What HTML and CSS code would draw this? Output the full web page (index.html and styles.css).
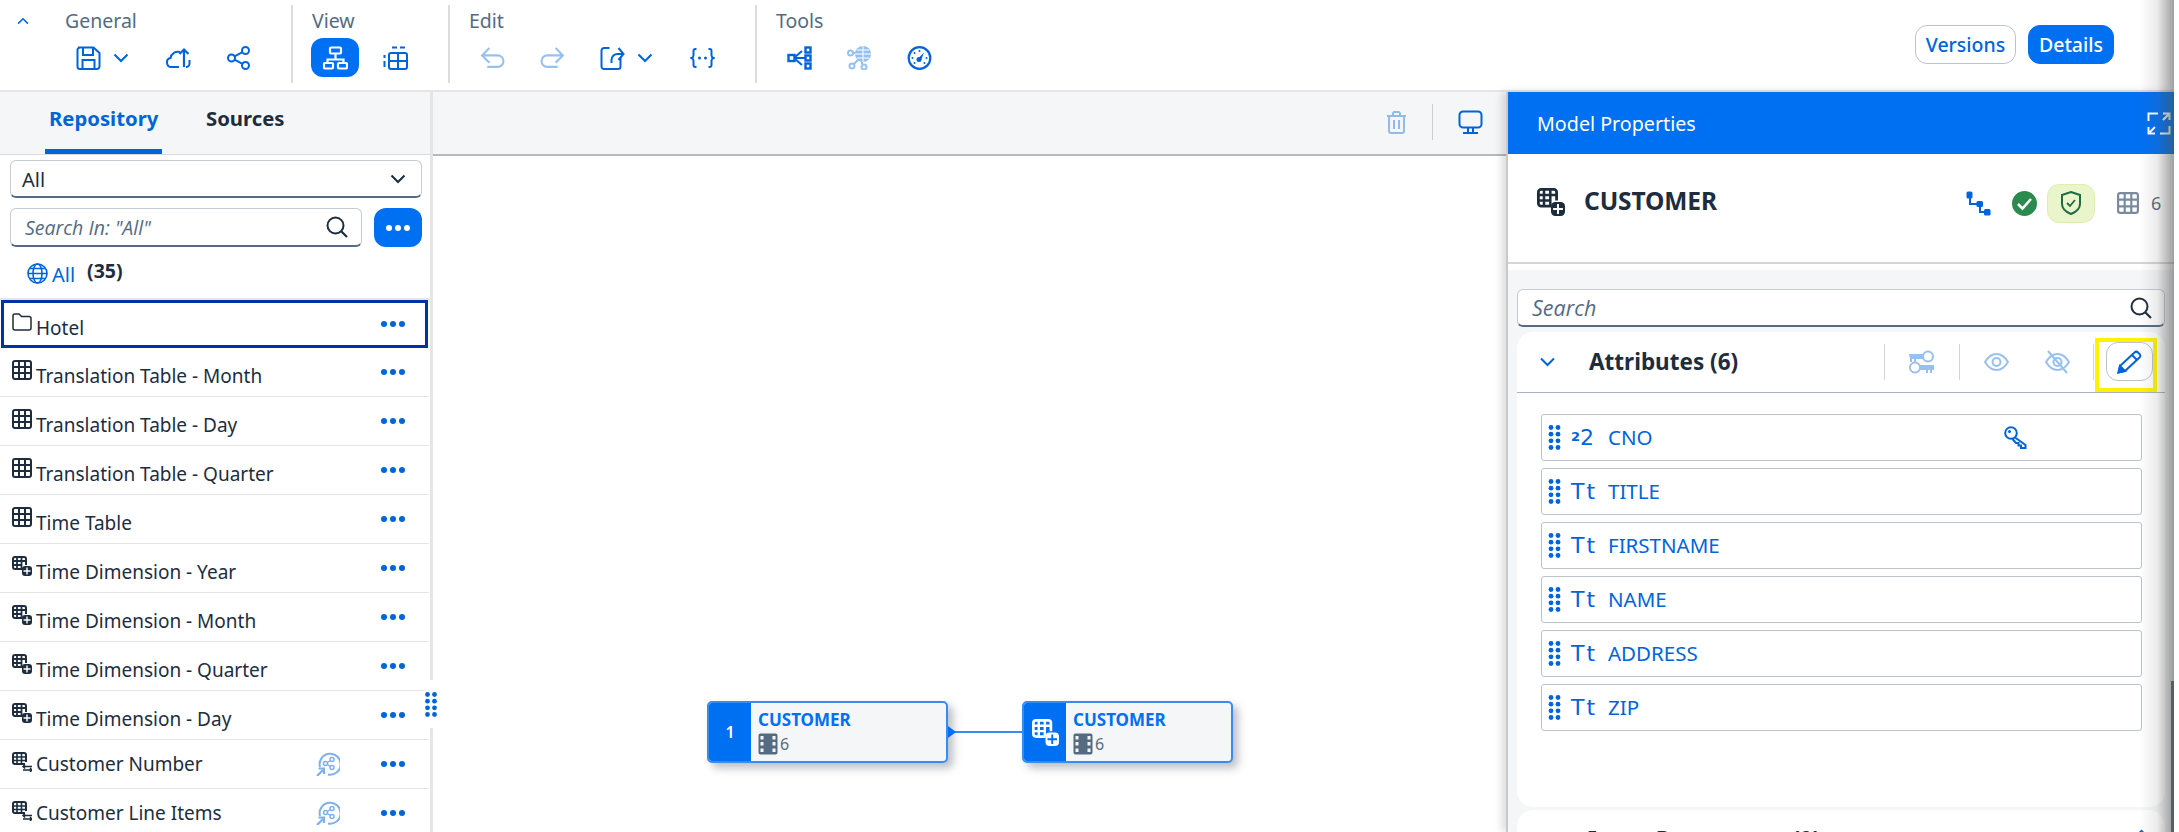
FILE: index.html
```html
<!DOCTYPE html>
<html lang="en">
<head>
<meta charset="utf-8">
<title>Model Properties</title>
<link rel="stylesheet" href="styles.css">
</head>
<body>
<svg class="defs" aria-hidden="true">
  <symbol id="i-chev" viewBox="0 0 16 10"><path d="M1.5 1.5 8 8l6.500-6.500" fill="none" stroke="currentColor" stroke-width="2"/></symbol>
  <symbol id="i-save" viewBox="0 0 25 24"><path d="M2 1.500h15.500L23.500 7v13.500a2.500 2.500 0 0 1-2.500 2.500H4a2.500 2.500 0 0 1-2.500-2.500V4A2.500 2.500 0 0 1 4 1.500zM7 2v7h10V2M6.500 23v-9h12v9" fill="none" stroke="currentColor" stroke-width="2"/></symbol>
  <symbol id="i-cloud" viewBox="0 0 25 24"><path d="M13 21H5.500a4.500 4.500 0 0 1-1-8.900A7.500 7.500 0 0 1 14 6M23.500 14v3.500a3.500 3.500 0 0 1-3.500 3.500" fill="none" stroke="currentColor" stroke-width="2"/><path d="M18 21V3.500M13.500 8 18 3.500 22.500 8" fill="none" stroke="currentColor" stroke-width="2.200"/></symbol>
  <symbol id="i-share" viewBox="0 0 24 24"><g fill="none" stroke="currentColor" stroke-width="2"><circle cx="5" cy="12" r="3.500"/><circle cx="19" cy="4.500" r="3.500"/><circle cx="19" cy="19.500" r="3.500"/><path d="m8 10.300 8-4.200M8 13.700l8 4.200"/></g></symbol>
  <symbol id="i-model" viewBox="0 0 25 24"><g fill="none" stroke="currentColor" stroke-width="2.200"><rect x="7" y="1.500" width="11" height="6" rx="1"/><path d="M12.500 7.500V13M4.500 17v-3.500h16V17"/><rect x="1" y="17" width="9" height="5.500" rx="1"/><rect x="15" y="17" width="9" height="5.500" rx="1"/></g></symbol>
  <symbol id="i-tbl-dash" viewBox="0 0 25 24"><g fill="none" stroke="currentColor" stroke-width="2"><path d="M9 1.500h5M17 1.500h5M1.500 9v3M1.500 15v6"/><rect x="6" y="7" width="18" height="16" rx="2"/><path d="M6 15h18M15 7v16"/></g></symbol>
  <symbol id="i-undo" viewBox="0 0 24 22"><path d="M9 1.500 2 8.500l7 7M2 8.500h15a5.500 5.500 0 0 1 0 11H7" fill="none" stroke="currentColor" stroke-width="2"/></symbol>
  <symbol id="i-redo" viewBox="0 0 24 22"><path d="M15 1.500l7 7-7 7M22 8.500H7a5.500 5.500 0 0 0 0 11h10" fill="none" stroke="currentColor" stroke-width="2"/></symbol>
  <symbol id="i-export" viewBox="0 0 24 24"><path d="M9 2H3.500A2.500 2.500 0 0 0 1 4.500V20.500A2.500 2.500 0 0 0 3.500 23h14a2.500 2.500 0 0 0 2.500-2.500V12" fill="none" stroke="currentColor" stroke-width="2"/><path d="M11 17v-3a6 6 0 0 1 6-6h5M18 2l5 6-5 6" fill="none" stroke="currentColor" stroke-width="2"/></symbol>
  <symbol id="i-code" viewBox="0 0 24 24"><path d="M6 3H5a2 2 0 0 0-2 2v4a3 3 0 0 1-2 3 3 3 0 0 1 2 3v4a2 2 0 0 0 2 2h1M18 3h1a2 2 0 0 1 2 2v4a3 3 0 0 0 2 3 3 3 0 0 0-2 3v4a2 2 0 0 1-2 2h-1" fill="none" stroke="currentColor" stroke-width="2"/><circle cx="9" cy="12" r="1.500" fill="currentColor"/><circle cx="15" cy="12" r="1.500" fill="currentColor"/></symbol>
  <symbol id="i-lineage" viewBox="0 0 25 24"><g fill="none" stroke="currentColor" stroke-width="2.400"><rect x="1.500" y="9" width="6" height="6"/><rect x="18.500" y="1.500" width="5" height="5"/><rect x="18.500" y="9.500" width="5" height="5"/><rect x="18.500" y="17.500" width="5" height="5"/></g><path d="M8 11 15 5M8 13l7 6M8 12h10" fill="none" stroke="currentColor" stroke-width="2"/></symbol>
  <symbol id="i-net" viewBox="0 0 25 24"><g fill="none" stroke="currentColor" stroke-width="2"><circle cx="3.500" cy="7" r="2.500"/><circle cx="5" cy="20" r="2.500"/><circle cx="17" cy="21" r="2.500"/><path d="M6 7h5M7 18l5-5M15 18v-4"/></g><circle cx="16" cy="8" r="8" fill="currentColor"/><path d="M8 8h16M16 0v16M10 4h12M10 12h12" stroke="#fff" stroke-width="1"/></symbol>
  <symbol id="i-gauge" viewBox="0 0 24 24"><circle cx="12" cy="12" r="10.800" fill="none" stroke="currentColor" stroke-width="2.200"/><path d="m10 13 6.500-6.500-3 8z" fill="currentColor"/><circle cx="11.500" cy="13.500" r="2.500" fill="currentColor"/><g fill="currentColor"><circle cx="5" cy="12" r="1"/><circle cx="7" cy="7" r="1"/><circle cx="12" cy="5" r="1"/><circle cx="19" cy="12" r="1"/><circle cx="7" cy="17" r="1"/><circle cx="17" cy="17" r="1"/></g></symbol>
  <symbol id="i-search" viewBox="0 0 22 22"><circle cx="9.500" cy="9.500" r="8" fill="none" stroke="currentColor" stroke-width="2"/><path d="m15 15 6 6" stroke="currentColor" stroke-width="2.200"/></symbol>
  <symbol id="i-dots" viewBox="0 0 24 6"><circle cx="3" cy="3" r="3" fill="currentColor"/><circle cx="12" cy="3" r="3" fill="currentColor"/><circle cx="21" cy="3" r="3" fill="currentColor"/></symbol>
  <symbol id="i-globe" viewBox="0 0 21 21"><g fill="none" stroke="currentColor" stroke-width="1.600"><circle cx="10.500" cy="10.500" r="9.500"/><ellipse cx="10.500" cy="10.500" rx="4.500" ry="9.500"/><path d="M1 10.500h19M2.500 5.500h16M2.500 15.500h16"/></g></symbol>
  <symbol id="i-folder" viewBox="0 0 20 18"><path d="M1 3a2 2 0 0 1 2-2h4l2.500 2.500H17a2 2 0 0 1 2 2V15a2 2 0 0 1-2 2H3a2 2 0 0 1-2-2z" fill="none" stroke="currentColor" stroke-width="1.500"/></symbol>
  <symbol id="i-table" viewBox="0 0 20 20"><rect x="1" y="1" width="18" height="18" rx="2" fill="none" stroke="currentColor" stroke-width="2"/><path d="M7 1v18M13 1v18M1 7h18M1 13h18" stroke="currentColor" stroke-width="2"/></symbol>
  <symbol id="i-dim" viewBox="0 0 20 20"><path d="M10 13H3a2 2 0 0 1-2-2V3a2 2 0 0 1 2-2h9a2 2 0 0 1 2 2v6" fill="none" stroke="currentColor" stroke-width="2"/><path d="M5 1v12M9.500 1v12M1 5h13M1 9h9" stroke="currentColor" stroke-width="1.800"/><rect x="10" y="10" width="10" height="10" rx="3" fill="currentColor"/><path d="M15 11.500v7M11.500 15h7" stroke="var(--cut,#fff)" stroke-width="1.400"/></symbol>
  <symbol id="i-repl" viewBox="0 0 20 20"><path d="M13 12H3a2 2 0 0 1-2-2V3a2 2 0 0 1 2-2h9a2 2 0 0 1 2 2v7" fill="none" stroke="currentColor" stroke-width="2"/><path d="M5 1v11M9.500 1v11M1 5h13M1 8.500h13" stroke="currentColor" stroke-width="1.600"/><path d="M20 14.500h-9M13 12.500l-2 2 2 2M11 18h9M18 16l2 2-2 2" fill="none" stroke="currentColor" stroke-width="1.500"/></symbol>
  <symbol id="i-rshare" viewBox="0 0 24 24"><path d="M4 15A10.500 10.500 0 1 1 12 22.500" fill="none" stroke="currentColor" stroke-width="2"/><g fill="none" stroke="currentColor" stroke-width="1.500"><circle cx="9.500" cy="11.500" r="2"/><circle cx="16" cy="7.500" r="2"/><circle cx="16" cy="15.500" r="2"/><path d="m11.500 10.500 3-2M11.500 12.500l3 2"/></g><path d="M1 24l6-6M2.500 16.500H8V22" fill="none" stroke="currentColor" stroke-width="2.200"/></symbol>
  <symbol id="i-film" viewBox="0 0 20 22"><rect x="0.500" y="0.500" width="19" height="21" rx="2" fill="currentColor"/><g fill="#f5f6f7"><rect x="2.500" y="3" width="3" height="3.500"/><rect x="2.500" y="9" width="3" height="3.500"/><rect x="2.500" y="15.500" width="3" height="3.500"/><rect x="14.500" y="3" width="3" height="3.500"/><rect x="14.500" y="9" width="3" height="3.500"/><rect x="14.500" y="15.500" width="3" height="3.500"/></g></symbol>
  <symbol id="i-trash" viewBox="0 0 21 23"><path d="M1 5h19M7 5V2.500A1.500 1.500 0 0 1 8.500 1h4A1.500 1.500 0 0 1 14 2.500V5M3 5v15a2 2 0 0 0 2 2h11a2 2 0 0 0 2-2V5M8 9v9M13 9v9" fill="none" stroke="currentColor" stroke-width="2"/></symbol>
  <symbol id="i-monitor" viewBox="0 0 25 24"><path d="M5 1.500h15A3.500 3.500 0 0 1 23.500 5v9a3.500 3.500 0 0 1-3.500 3.500H5A3.500 3.500 0 0 1 1.500 14V5A3.500 3.500 0 0 1 5 1.500zM10 18v5M15 18v5M5 23h15" fill="none" stroke="currentColor" stroke-width="2"/></symbol>
  <symbol id="i-expand" viewBox="0 0 24 23"><path d="M1.500 9V1.500H11M22.500 14v7.500H13" fill="none" stroke="currentColor" stroke-width="2"/><path d="M16 1.500h6.500V8M22 2l-6 6M8 21.500H1.500V15M2 21l6-6" fill="none" stroke="currentColor" stroke-width="2"/></symbol>
  <symbol id="i-tree" viewBox="0 0 25 25"><path d="M4 4v9h10v8h8" fill="none" stroke="currentColor" stroke-width="2"/><rect x="0.500" y="0.500" width="6" height="7" rx="1.500" fill="currentColor"/><rect x="10.500" y="10" width="6.500" height="6" rx="1.500" fill="currentColor"/><rect x="18" y="18" width="6.500" height="6.500" rx="1.500" fill="currentColor"/></symbol>
  <symbol id="i-ok" viewBox="0 0 25 25"><circle cx="12.500" cy="12.500" r="12.500" fill="#2b8a4d"/><path d="m6 13 4.500 4.500L19 8" fill="none" stroke="#fff" stroke-width="2.600"/></symbol>
  <symbol id="i-shield" viewBox="0 0 20 24"><path d="M10 1 19 4v9c0 5-4 8-9 10-5-2-9-5-9-10V4z" fill="none" stroke="#1e6b46" stroke-width="2"/><path d="m6 12 3 3 5-6" fill="none" stroke="#1e6b46" stroke-width="1.800"/></symbol>
  <symbol id="i-grip" viewBox="0 0 12 25"><g fill="currentColor"><circle cx="2.500" cy="2.500" r="2.400"/><circle cx="9.500" cy="2.500" r="2.400"/><circle cx="2.500" cy="9.200" r="2.400"/><circle cx="9.500" cy="9.200" r="2.400"/><circle cx="2.500" cy="15.800" r="2.400"/><circle cx="9.500" cy="15.800" r="2.400"/><circle cx="2.500" cy="22.500" r="2.400"/><circle cx="9.500" cy="22.500" r="2.400"/></g></symbol>
  <symbol id="i-keys" viewBox="0 0 25 24"><g fill="none" stroke="currentColor" stroke-width="2"><circle cx="19" cy="6.500" r="5"/><circle cx="6" cy="17.500" r="5"/></g><path d="M0 4h14v5H7v3H5V9H3v3H1V9z M11 15h14v5h-2v3h-2v-3h-2v3h-2v-3h-6z" fill="currentColor"/></symbol>
  <symbol id="i-eye" viewBox="0 0 25 18"><path d="M1 9c3-5 7-8 11.500-8S21 4 24 9c-3 5-7 8-11.500 8S4 14 1 9z" fill="none" stroke="currentColor" stroke-width="2"/><circle cx="12.500" cy="9" r="4" fill="none" stroke="currentColor" stroke-width="2"/></symbol>
  <symbol id="i-eyeoff" viewBox="0 0 25 24"><path d="M1 12c3-5 7-8 11.500-8S21 7 24 12c-3 5-7 8-11.500 8S4 17 1 12z" fill="none" stroke="currentColor" stroke-width="2"/><circle cx="12.500" cy="12" r="4" fill="none" stroke="currentColor" stroke-width="2"/><path d="M3 1l19 22" stroke="currentColor" stroke-width="2"/></symbol>
  <symbol id="i-pencil" viewBox="0 0 25 24"><path d="M1.500 22.500 3 16 17.500 2.500a2.500 2.500 0 0 1 3.500 0l1.500 1.500a2.500 2.500 0 0 1 0 3.500L8 21z" fill="none" stroke="currentColor" stroke-width="2"/><path d="M1.500 22.500 3 16l5 5zM15 5l5 5" fill="currentColor" stroke="currentColor" stroke-width="2"/></symbol>
  <symbol id="i-key" viewBox="0 0 23 23"><circle cx="7" cy="7" r="5.800" fill="none" stroke="currentColor" stroke-width="2"/><circle cx="5.500" cy="5.500" r="1.500" fill="currentColor"/><path d="M11 11.500 21.500 19v3H17v-2.500h-2.500V17H12L8.500 13" fill="none" stroke="currentColor" stroke-width="2"/></symbol>
</svg>

<div class="page">
  <header class="toolbar">
    <div class="collapse"><svg class="ic-chev-up"><use href="#i-chev"/></svg></div>
    <section class="group group-general">
      <div class="group-label">General</div>
      <div class="tools">
        <button class="tool split"><svg class="ic"><use href="#i-save"/></svg><svg class="ic-chev"><use href="#i-chev"/></svg></button>
        <button class="tool"><svg class="ic"><use href="#i-cloud"/></svg></button>
        <button class="tool"><svg class="ic"><use href="#i-share"/></svg></button>
      </div>
    </section>
    <section class="group">
      <div class="group-label">View</div>
      <div class="tools">
        <button class="tool active"><svg class="ic"><use href="#i-model"/></svg></button>
        <button class="tool"><svg class="ic"><use href="#i-tbl-dash"/></svg></button>
      </div>
    </section>
    <section class="group group-thin">
      <div class="group-label">Edit</div>
      <div class="tools">
        <button class="tool off"><svg class="ic"><use href="#i-undo"/></svg></button>
        <button class="tool off"><svg class="ic"><use href="#i-redo"/></svg></button>
        <button class="tool split"><svg class="ic"><use href="#i-export"/></svg><svg class="ic-chev"><use href="#i-chev"/></svg></button>
        <button class="tool"><svg class="ic"><use href="#i-code"/></svg></button>
      </div>
    </section>
    <section class="group group-last">
      <div class="group-label">Tools</div>
      <div class="tools">
        <button class="tool"><svg class="ic"><use href="#i-lineage"/></svg></button>
        <button class="tool off"><svg class="ic"><use href="#i-net"/></svg></button>
        <button class="tool"><svg class="ic"><use href="#i-gauge"/></svg></button>
      </div>
    </section>
    <div class="toolbar-actions">
      <button class="pill">Versions</button>
      <button class="pill pill-on">Details</button>
    </div>
  </header>

  <main class="main">
    <aside class="left">
      <nav class="tabs">
        <div class="tab tab-on">Repository</div>
        <div class="tab">Sources</div>
      </nav>
      <div class="filters">
        <div class="select"><span class="select-value">All</span><svg class="sel-chev"><use href="#i-chev"/></svg></div>
        <div class="search-row">
          <div class="search search-left"><span class="ph">Search In: "All"</span><svg class="ic-search"><use href="#i-search"/></svg></div>
          <button class="more"><svg class="ic-dots"><use href="#i-dots"/></svg></button>
        </div>
      </div>
      <div class="scope">
        <svg class="ic-globe"><use href="#i-globe"/></svg><span class="scope-name">All</span><b class="scope-count">(35)</b>
      </div>
      <ul class="list">
        <li class="row row-focus"><svg class="ic-row"><use href="#i-folder"/></svg><span class="name low">Hotel</span><svg class="row-dots"><use href="#i-dots"/></svg></li>
        <li class="row"><svg class="ic-row"><use href="#i-table"/></svg><span class="name low">Translation Table - Month</span><svg class="row-dots"><use href="#i-dots"/></svg></li>
        <li class="row"><svg class="ic-row"><use href="#i-table"/></svg><span class="name low">Translation Table - Day</span><svg class="row-dots"><use href="#i-dots"/></svg></li>
        <li class="row"><svg class="ic-row"><use href="#i-table"/></svg><span class="name low">Translation Table - Quarter</span><svg class="row-dots"><use href="#i-dots"/></svg></li>
        <li class="row"><svg class="ic-row"><use href="#i-table"/></svg><span class="name low">Time Table</span><svg class="row-dots"><use href="#i-dots"/></svg></li>
        <li class="row"><svg class="ic-row"><use href="#i-dim"/></svg><span class="name low">Time Dimension - Year</span><svg class="row-dots"><use href="#i-dots"/></svg></li>
        <li class="row"><svg class="ic-row"><use href="#i-dim"/></svg><span class="name low">Time Dimension - Month</span><svg class="row-dots"><use href="#i-dots"/></svg></li>
        <li class="row"><svg class="ic-row"><use href="#i-dim"/></svg><span class="name low">Time Dimension - Quarter</span><svg class="row-dots"><use href="#i-dots"/></svg></li>
        <li class="row"><svg class="ic-row"><use href="#i-dim"/></svg><span class="name low">Time Dimension - Day</span><svg class="row-dots"><use href="#i-dots"/></svg></li>
        <li class="row"><svg class="ic-row"><use href="#i-repl"/></svg><span class="name">Customer Number</span><svg class="row-share"><use href="#i-rshare"/></svg><svg class="row-dots"><use href="#i-dots"/></svg></li>
        <li class="row"><svg class="ic-row"><use href="#i-repl"/></svg><span class="name">Customer Line Items</span><svg class="row-share"><use href="#i-rshare"/></svg><svg class="row-dots"><use href="#i-dots"/></svg></li>
      </ul>
    </aside>

    <div class="splitter"><div class="grip"><svg class="ic-grip"><use href="#i-grip"/></svg></div></div>

    <section class="canvas">
      <div class="canvas-bar">
        <svg class="ic-trash"><use href="#i-trash"/></svg>
        <span class="canvas-sep"></span>
        <svg class="ic-monitor"><use href="#i-monitor"/></svg>
      </div>
      <div class="stage">
        <div class="node node-a">
          <div class="node-side node-num">1</div>
          <div class="node-body"><div class="node-title">CUSTOMER</div><div class="node-meta"><svg class="ic-film"><use href="#i-film"/></svg>6</div></div>
        </div>
        <div class="link"></div>
        <div class="node node-b">
          <div class="node-side"><svg class="ic-node"><use href="#i-dim"/></svg></div>
          <div class="node-body"><div class="node-title">CUSTOMER</div><div class="node-meta"><svg class="ic-film"><use href="#i-film"/></svg>6</div></div>
        </div>
      </div>
    </section>

    <aside class="panel">
      <div class="panel-head"><span>Model Properties</span><svg class="ic-expand"><use href="#i-expand"/></svg></div>
      <div class="panel-meta">
        <svg class="ic-title"><use href="#i-dim"/></svg>
        <h1 class="panel-title">CUSTOMER</h1>
        <div class="meta-right">
          <svg class="ic-25 blue"><use href="#i-tree"/></svg>
          <svg class="ic-25 m21"><use href="#i-ok"/></svg>
          <span class="shield"><svg class="ic-shield"><use href="#i-shield"/></svg></span>
          <svg class="ic-count"><use href="#i-table"/></svg>
          <span class="count">6</span>
        </div>
      </div>
      <div class="panel-body">
        <div class="search search-panel"><span class="ph ph-panel">Search</span><svg class="ic-search"><use href="#i-search"/></svg></div>
        <div class="card">
          <div class="card-head">
            <svg class="ic-card-chev"><use href="#i-chev"/></svg>
            <h2 class="card-title">Attributes (6)</h2>
            <span class="vsep vsep-1"></span>
            <svg class="ic-keys off-ic"><use href="#i-keys"/></svg>
            <span class="vsep vsep-2"></span>
            <svg class="ic-eye off-ic"><use href="#i-eye"/></svg>
            <svg class="ic-eyeoff off-ic"><use href="#i-eyeoff"/></svg>
            <span class="vsep vsep-3"></span>
            <div class="highlight"><button class="edit"><svg class="ic-pencil"><use href="#i-pencil"/></svg></button></div>
          </div>
          <div class="attrs">
            <div class="attr"><svg class="attr-grip"><use href="#i-grip"/></svg><span class="attr-type attr-num"><sup>2</sup>2</span><span class="attr-name">CNO</span><svg class="ic-key"><use href="#i-key"/></svg></div>
            <div class="attr"><svg class="attr-grip"><use href="#i-grip"/></svg><span class="attr-type">Tt</span><span class="attr-name">TITLE</span></div>
            <div class="attr"><svg class="attr-grip"><use href="#i-grip"/></svg><span class="attr-type">Tt</span><span class="attr-name">FIRSTNAME</span></div>
            <div class="attr"><svg class="attr-grip"><use href="#i-grip"/></svg><span class="attr-type">Tt</span><span class="attr-name">NAME</span></div>
            <div class="attr"><svg class="attr-grip"><use href="#i-grip"/></svg><span class="attr-type">Tt</span><span class="attr-name">ADDRESS</span></div>
            <div class="attr"><svg class="attr-grip"><use href="#i-grip"/></svg><span class="attr-type">Tt</span><span class="attr-name">ZIP</span></div>
          </div>
        </div>
        <div class="card card-next">
          <div class="card-next-head"><h2 class="card-title">Input Parameters (0)</h2><svg class="ic-next-chev"><use href="#i-chev"/></svg></div>
        </div>
      </div>
    </aside>
    <div class="edge-bar"></div>
  </main>
  <div class="edge-shadow"></div>
</div>
</body>
</html>
```
FILE: styles.css
```css
* { box-sizing: border-box; }
html, body { margin: 0; padding: 0; height: 832px; overflow: hidden; background: #fff; }
body { font-family: "Noto Sans", "Open Sans", sans-serif; color: #1d2d3e; }
.defs { position: absolute; width: 0; height: 0; }
svg { display: block; flex: none; }
button { font: inherit; border: 0; background: none; padding: 0; margin: 0; color: inherit; }
h1, h2, ul { margin: 0; padding: 0; list-style: none; }

.page { position: relative; width: 2174px; height: 832px; overflow: hidden; display: flex; flex-direction: column; }

/* toolbar */
.toolbar { height: 92px; flex: none; display: flex; align-items: flex-start; padding-top: 5px; border-bottom: 2px solid #e5e5e5; background: #fff; }
.collapse { width: 64px; padding: 12px 0 0 17px; color: #0064d9; }
.ic-chev-up { width: 12px; height: 8px; transform: rotate(180deg); }
.group { height: 78px; padding: 0 29px 0 18px; border-right: 2px solid #dcdcdc; }
.group-general { padding-left: 0; }
.group-thin { border-right-width: 2px; }
.group-last { border-right: 0; padding-right: 0; }
.group-label { height: 33px; line-height: 31px; font-size: 19.500px; color: #556b82; padding-left: 1px; }
.tools { display: flex; gap: 12px; }
.tool { width: 48px; height: 39px; border-radius: 12px; color: #0064d9; display: flex; align-items: center; justify-content: center; }
.tool .ic { width: 25px; height: 24px; }
.tool.split { width: 78px; justify-content: flex-start; padding-left: 12px; gap: 12px; }
.ic-chev { width: 16px; height: 10px; }
.tool.active { background: #0070f2; color: #fff; }
.tool.off { opacity: .4; }
.toolbar-actions { margin-left: auto; display: flex; gap: 12px; margin-top: 20px; margin-right: 60px; }
.pill { height: 39px; border-radius: 12px; font-size: 19.500px; font-weight: 500; }
.pill { width: 101px; border: 1px solid #bcc3ca; color: #0064d9; background: #fff; }
.pill-on { width: 86px; background: #0070f2; border-color: #0070f2; color: #fff; }

.main { flex: 1; min-height: 0; display: flex; position: relative; }

/* left panel */
.left { width: 430px; flex: none; background: #fff; overflow: hidden; }
.tabs { height: 63px; display: flex; background: #f5f6f7; border-bottom: 1px solid #d9d9d9; padding-left: 45px; }
.tab { font-size: 20.300px; font-weight: 700; height: 62px; line-height: 52px; padding: 0 4px; margin-right: 40px; }
.tab-on { color: #0064d9; width: 117px; border-bottom: 5px solid #0064d9; }
.filters { padding: 5px 8px 0 10px; }
.select { height: 38px; border: 1px solid #c4cbd2; border-bottom: 2px solid #556b82; border-radius: 6px; display: flex; align-items: center; justify-content: space-between; padding: 0 15px 0 11px; font-size: 20px; }
.select-value { padding-top: 2px; }
.sel-chev { width: 16px; height: 10px; }
.search-row { display: flex; justify-content: space-between; margin-top: 10px; }
.search { height: 39px; border: 1px solid #c4cbd2; border-bottom: 2px solid #556b82; border-radius: 6px; background: #fff; display: flex; align-items: center; justify-content: space-between; }
.search-left { width: 352px; padding: 0 13px 0 14px; }
.ph { font-family: "Open Sans", sans-serif; font-style: italic; font-size: 19.500px; color: #556b82; }
.ph-panel { font-size: 21.500px; }
.ic-search { width: 22px; height: 22px; color: #1d2d3e; }
.more { width: 48px; height: 39px; border-radius: 12px; background: #0070f2; color: #fff; display: flex; align-items: center; justify-content: center; }
.ic-dots { width: 24px; height: 6px; }
.scope { height: 53px; display: flex; align-items: center; padding: 0 0 2px 27px; border-bottom: 2px solid #e5e5e5; }
.ic-globe { width: 21px; height: 21px; color: #0064d9; margin-top: 3px; }
.scope-name { color: #0064d9; font-size: 20px; margin-left: 4px; padding-top: 6px; }
.scope-count { font-size: 19.500px; margin-left: 12px; margin-top: -2px; }
.row { height: 49px; display: flex; align-items: center; padding: 0 24px 0 12px; border-bottom: 1px solid #e5e5e5; width: 429px; }
.row-focus { height: 48px; margin-left: 1px; width: 427px; border: 3px solid #0032a5; padding: 0 20px 0 8px; }
.ic-row { width: 20px; height: 20px; margin-right: 4px; margin-top: -4px; }
.name { font-size: 19px; flex: 1; }
.low { padding-top: 8px; }
.row-dots { width: 24px; height: 6px; color: #0064d9; }
.row-share { width: 24px; height: 24px; color: #0064d9; opacity: .5; margin-right: 41px; }

.splitter { width: 3px; flex: none; background: #e5e5e5; position: relative; }
.grip { position: absolute; left: -5px; top: 588px; width: 12px; height: 48px; background: #fff; color: #0064d9; display: flex; align-items: center; }
.ic-grip { width: 12px; height: 25px; }

/* canvas */
.canvas { flex: 1; min-width: 0; display: flex; flex-direction: column; background: #fff; }
.canvas-bar { height: 64px; flex: none; background: #f5f6f7; border-bottom: 2px solid #b2bac3; display: flex; align-items: center; justify-content: flex-end; padding: 0 23px 2px 0; }
.ic-trash { width: 21px; height: 23px; color: #0064d9; opacity: .4; }
.canvas-sep { width: 1px; height: 36px; background: #c9ced4; margin: 0 25px; }
.ic-monitor { width: 25px; height: 24px; color: #0064d9; }
.stage { flex: 1; position: relative; }
.node { position: absolute; top: 545px; height: 62px; display: flex; background: #f5f6f7; border: 2px solid #3a8bf0; border-radius: 5px; box-shadow: 5px 5px 9px rgba(60, 70, 85, .35); overflow: hidden; }
.node-a { left: 274px; width: 241px; }
.node-b { left: 589px; width: 211px; }
.node-side { width: 42px; flex: none; background: #0070f2; color: #fff; display: flex; align-items: center; justify-content: center; font-size: 16px; font-weight: 600; --cut: #0070f2; }
.ic-node { width: 27px; height: 27px; }
.node-body { padding: 7px 0 0 7px; }
.node-title { font-size: 17px; font-weight: 700; color: #0070f2; line-height: 20px; }
.node-meta { display: flex; align-items: center; gap: 2px; font-size: 16px; color: #556b82; margin-top: 3px; }
.ic-film { width: 20px; height: 22px; color: #556b82; }
.link { position: absolute; left: 515px; top: 575px; width: 74px; height: 2px; background: #3a8bf0; }
.link::before { content: ""; position: absolute; left: 0; top: -5px; border-left: 8px solid #0070f2; border-top: 6px solid transparent; border-bottom: 6px solid transparent; }

/* right panel */
.panel { width: 668px; flex: none; position: relative; border-left: 2px solid #c9c9c9; box-shadow: -4px 0 8px rgba(0, 0, 0, .14); background: #fff; overflow: hidden; display: flex; flex-direction: column; }
.panel-head { height: 62px; flex: none; background: #0070f2; color: #fff; display: flex; align-items: center; justify-content: space-between; padding: 0 3px 0 29px; font-size: 19.700px; }
.ic-expand { width: 24px; height: 23px; }
.panel-meta { height: 110px; flex: none; display: flex; align-items: center; padding: 0 12px 10px 29px; border-bottom: 2px solid #d5d5d5; }
.ic-title { width: 28px; height: 28px; margin-top: -3px; }
.panel-title { font-size: 24.500px; font-weight: 700; margin-left: 19px; padding-bottom: 6px; letter-spacing: -.1px; }
.meta-right { margin-left: auto; display: flex; align-items: center; }
.ic-25 { width: 25px; height: 25px; }
.blue { color: #0064d9; }
.m21 { margin-left: 21px; }
.shield { width: 48px; height: 39px; margin-left: 10px; border-radius: 12px; background: #ebf5cb; border: 1px solid #dfeeb0; display: flex; align-items: center; justify-content: center; }
.ic-shield { width: 20px; height: 24px; }
.ic-count { width: 22px; height: 22px; color: #7a8ba0; margin-left: 22px; }
.count { width: 11px; margin-left: 12px; font-size: 18px; color: #556b82; }
.panel-body { flex: 1; min-height: 0; margin-top: 6px; background: #f5f6f7; padding: 19px 9px 0 9px; }
.search-panel { height: 38px; padding: 0 12px 0 14px; }
.card { background: #fff; border-radius: 16px; margin-top: 5px; height: 475px; }
.card-next { height: 60px; margin-top: 3px; }
.card-head { height: 61px; display: flex; align-items: center; border-bottom: 1px solid #a9b4be; padding-left: 22px; }
.ic-card-chev { width: 17px; height: 10px; color: #0064d9; }
.card-title { font-size: 22.500px; font-weight: 700; margin-left: 33px; padding-bottom: 2px; }
.vsep { width: 1px; height: 36px; background: #d0d5da; }
.vsep-1 { margin-left: auto; }
.vsep-2 { margin-left: 25px; }
.vsep-3 { margin-left: 23px; }
.off-ic { color: #0064d9; opacity: .4; }
.ic-keys { width: 25px; height: 24px; margin-left: 24px; }
.ic-eye { width: 25px; height: 18px; margin-left: 24px; }
.ic-eyeoff { width: 25px; height: 24px; margin-left: 36px; }
.highlight { width: 62px; height: 54px; align-self: flex-end; margin: 0 8px 0 1px; border: 4px solid #fff200; padding: 0 0 0 7px; }
.edit { width: 47px; height: 39px; display: flex; align-items: center; justify-content: center; border: 1px solid #bcc3ca; border-radius: 12px; background: #fff; color: #0064d9; }
.ic-pencil { width: 25px; height: 24px; }
.attrs { padding: 21px 23px 0 24px; display: flex; flex-direction: column; gap: 7px; }
.attr { height: 47px; border: 1px solid #bcc3ca; border-radius: 3px; display: flex; align-items: center; color: #0064d9; padding-left: 6px; }
.attr-grip { width: 13px; height: 25px; }
.attr-type { width: 25px; margin-left: 10px; font-family: "DejaVu Sans", sans-serif; font-size: 22px; letter-spacing: 2px; line-height: 1; white-space: nowrap; }
.attr-num sup { font-size: 13px; font-weight: 700; vertical-align: 4px; line-height: 0; letter-spacing: 0; }
.attr-name { margin-left: 12px; font-size: 20.500px; flex: 1; padding-bottom: 2px; }
.ic-key { width: 23px; height: 23px; margin-right: 114px; }
.card-next-head { display: flex; align-items: flex-start; justify-content: space-between; padding: 14px 17px 0 38px; }
.ic-next-chev { width: 13px; height: 8px; color: #0064d9; transform: rotate(180deg); margin-top: 5px; }

.edge-bar { position: absolute; right: 0; top: 589px; width: 3px; height: 160px; background: #5b6b7e; }
.edge-shadow { position: absolute; right: 0; top: 0; width: 34px; height: 832px; background: linear-gradient(to right, rgba(90, 90, 90, 0), rgba(90, 90, 90, .12) 50%, rgba(80, 80, 80, .55)); pointer-events: none; }
```
